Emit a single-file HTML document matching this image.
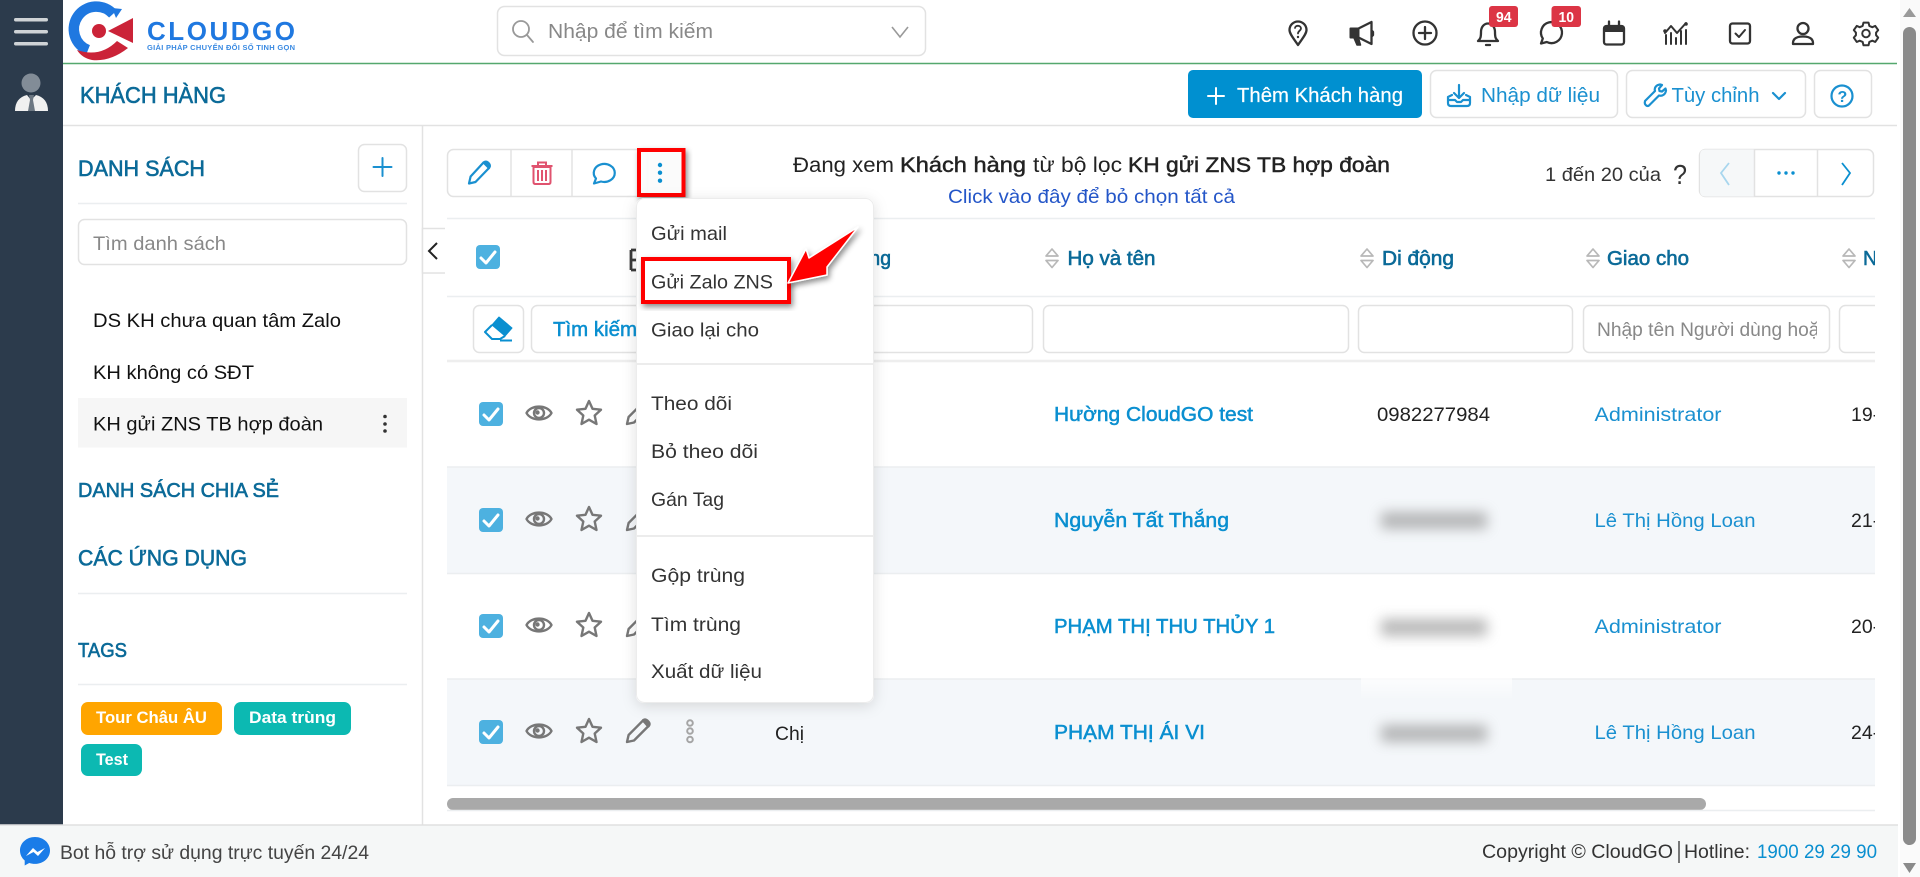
<!DOCTYPE html>
<html lang="vi">
<head>
<meta charset="utf-8">
<title>Khách hàng - CloudGO</title>
<style>
html,body{margin:0;padding:0;width:1920px;height:877px;overflow:hidden;background:#fff}
svg{display:block}
text{font-family:"Liberation Sans","Noto Sans CJK SC",sans-serif;font-size:19.5px;fill:#222;white-space:pre}
.blue{fill:#0a8fd0}.bm{fill:#0a8fd0;stroke:#0a8fd0;stroke-width:.5px}
.teal{fill:#0b6a98;stroke:#0b6a98;stroke-width:.6px}
.gr{fill:#888}
.mi{fill:#333}
.box{fill:#fff;stroke:#e2e2e2;stroke-width:1.5px}
.ln{stroke:#ebeef0;stroke-width:1.5px}
.ic{fill:none;stroke:#333;stroke-width:2.3px;stroke-linecap:round;stroke-linejoin:round}
.icb{fill:none;stroke:#1a90d0;stroke-width:2.2px;stroke-linecap:round;stroke-linejoin:round}
.g{fill:none;stroke:#777;stroke-width:2.4px;stroke-linejoin:round;stroke-linecap:round}
</style>
</head>
<body>
<svg width="1920" height="877" viewBox="0 0 1920 877" xmlns="http://www.w3.org/2000/svg">
<defs>
<filter id="blur" x="-30%" y="-150%" width="160%" height="400%"><feGaussianBlur stdDeviation="6.500"/></filter>
<filter id="sh" x="-20%" y="-20%" width="140%" height="140%"><feDropShadow dx="2" dy="3" stdDeviation="3" flood-color="#000" flood-opacity=".45"/></filter>
<filter id="menu" x="-20%" y="-10%" width="140%" height="120%"><feDropShadow dx="0" dy="3" stdDeviation="7" flood-color="#000" flood-opacity=".13"/></filter>
<clipPath id="tbl"><rect x="447" y="220" width="1428" height="590"/></clipPath>
<clipPath id="ph"><rect x="1597" y="310" width="220" height="40"/></clipPath>
<linearGradient id="fade" x1="0" y1="0" x2="0" y2="1"><stop offset="0" stop-color="#fff" stop-opacity="0"/><stop offset=".5" stop-color="#fff" stop-opacity=".7"/><stop offset="1" stop-color="#fff" stop-opacity="0"/></linearGradient>
<g id="chk"><rect x="-12" y="-12" width="24" height="24" rx="4" fill="#4db1e0"/><path d="M-7 1l5 5 9-11" fill="none" stroke="#fff" stroke-width="3" stroke-linecap="round" stroke-linejoin="round"/></g>
<g id="eye"><path class="g" d="M-12.5 0C-8-8.500 8-8.500 12.500 0 8 8.500-8 8.500-12.500 0Z"/><circle r="5" class="g"/><circle cx="-1.500" cy="-.5" r="2.200" fill="#777"/></g>
<path id="star" class="g" d="M0-12l3.500 7.800 8.500.9-6.300 5.800 1.800 8.500L0 6.700-7.500 11l1.800-8.500L-12-3.300l8.500-.9Z"/>
<g id="pen"><path class="g" d="M-11 11l1.600-7L5-10.500l5.500 5.500L-4 9.500Z"/><path d="M4-11.500q3-2.500 6 0l1.500 1.500q2.500 3 0 6l-1.500 1-6-7Z" fill="#777"/></g>
<g id="sort"><path d="M0-9.500l6 7h-12Z M0 9l6-7h-12Z" fill="none" stroke="#b8b8b8" stroke-width="1.700" stroke-linejoin="round"/></g>
</defs>

<!-- page frame -->
<rect width="1920" height="877" fill="#fff"/>
<rect x="0" y="0" width="63" height="825" fill="#2c3b4c"/>
<rect x="14" y="18" width="34" height="3.500" rx="1.700" fill="#cfd3d6"/>
<rect x="14" y="30" width="34" height="3.500" rx="1.700" fill="#cfd3d6"/>
<rect x="14" y="42" width="34" height="3.500" rx="1.700" fill="#cfd3d6"/>
<circle cx="31" cy="83" r="9.500" fill="#828c97"/>
<path d="M15 111Q15 98 27 95L31 100 36 95Q48 98 48 111Z" fill="#f0f0f0"/>
<path d="M29 95h5l-1 5 2 11h-7l2-11Z" fill="#6c7782"/>

<!-- logo -->
<path d="M113 14A22.500 22.500 0 1 0 88 50" fill="none" stroke="#1f78e0" stroke-width="10.500"/>
<path d="M112 8l10 1-6 9Z" fill="#1f78e0"/>
<circle cx="99" cy="31" r="7" fill="#cb2338"/>
<path d="M108 31L133 18V43Z" fill="#cb2338"/>
<path d="M77 50Q100 58 117 41L128 48Q110 62 92 60 82 58 77 50Z" fill="#cb2338"/>
<text x="147" y="40" textLength="148" lengthAdjust="spacing" style="font-size:26px;font-weight:700;fill:#1f78e0">CLOUDGO</text>
<text x="147" y="50" textLength="148" lengthAdjust="spacing" style="font-size:7.500px;font-weight:700;fill:#3a8ae2">GIẢI PHÁP CHUYỂN ĐỔI SỐ TINH GỌN</text>

<!-- top search -->
<rect x="497.500" y="6.500" width="428" height="49" rx="7" class="box"/>
<circle cx="521" cy="29" r="8" fill="none" stroke="#999" stroke-width="1.800"/><path d="M527 35l6 7" stroke="#999" stroke-width="1.800" stroke-linecap="round"/>
<text x="548" y="38" textLength="165" lengthAdjust="spacingAndGlyphs" class="gr" style="font-size:20px">Nhập để tìm kiếm</text>
<path d="M892 27l8 10 8-10" fill="none" stroke="#999" stroke-width="1.600"/>
<line x1="63" y1="63.500" x2="1897" y2="63.500" stroke="#55a86e" stroke-width="1.500"/>

<!-- top icons -->
<path class="ic" d="M1298 45c-4-6-8.500-11-8.500-15a8.500 8.500 0 0 1 17 0c0 4-4.500 9-8.500 15Z"/>
<path class="ic" d="M1295 28c0-3 6-3 6 .5 0 2-3 2.500-3 5" style="stroke-width:1.800px"/><circle cx="1298" cy="37" r="1.200" fill="#333"/>
<path d="M1350.500 28.500h8v9h-8Z" fill="#333" stroke="#333" stroke-width="2" stroke-linejoin="round"/>
<path class="ic" d="M1358.500 28.500l13-6.500v22l-13-6.500M1371.500 30.500l1.500 1.500v3l-1.500 1.500"/>
<path d="M1354 38l3 7h3.500l-2-7Z" fill="#333" stroke="#333" stroke-width="1.500" stroke-linejoin="round"/>
<circle class="ic" cx="1425" cy="33" r="11.500"/><path class="ic" d="M1425 27v12M1419 33h12"/>
<path class="ic" d="M1478 41h20c-2.500-2-3-4-3-9 0-5-3-8.500-7-8.500s-7 3.500-7 8.500c0 5-.5 7-3 9ZM1486 45h4"/>
<path class="ic" d="M1541 43.500l1.800-5a10.500 10.500 0 1 1 4 3.500Z"/>
<rect class="ic" x="1604" y="26" width="20" height="18.500" rx="2.500"/><path d="M1604 26h20v6h-20Z" fill="#333"/><path class="ic" d="M1609 21.500v4M1619 21.500v4"/>
<path class="ic" d="M1665 33l6-7 6 7 9-10M1666 35v9M1671 33v11M1676 38v6M1681 31v13M1686 30v14" style="stroke-width:2px"/>
<circle cx="1665" cy="31" r="1.800" fill="#333"/><circle cx="1686" cy="24" r="1.800" fill="#333"/>
<rect class="ic" x="1730" y="23.500" width="20" height="20" rx="2.500"/><path class="ic" d="M1735.500 33.500l3.500 3.500 6-7" style="stroke-width:2px"/>
<circle class="ic" cx="1803" cy="28.500" r="5.500"/><path class="ic" d="M1793 44c0-2 0-3 1.500-5 2-2 5-2.500 8.500-2.500s6.500.5 8.500 2.500c1.500 2 1.500 3 1.500 5Z"/>
<g transform="translate(1866 33.500) scale(.84) translate(-1866 -33.500)"><path class="ic" d="M1863 20.500h6l1 4 3.500 1.500 3.500-1.500 3.500 5-2.500 3v3l2.500 3-3.500 5-3.500-1.500-3.500 1.500-1 4h-6l-1-4-3.500-1.500-3.500 1.500-3.500-5 2.500-3v-3l-2.500-3 3.500-5 3.500 1.500 3.500-1.500Z" style="stroke-width:2.400px"/><circle class="ic" cx="1866" cy="33.500" r="4.500"/></g>
<rect x="1489" y="6" width="29" height="21" rx="3" fill="#dc3545"/><text x="1496" y="22" textLength="15.500" lengthAdjust="spacingAndGlyphs" style="font-size:15px;font-weight:700;fill:#fff">94</text>
<rect x="1551.500" y="6" width="29.500" height="21" rx="3" fill="#dc3545"/><text x="1558.500" y="22" textLength="15.500" lengthAdjust="spacingAndGlyphs" style="font-size:15px;font-weight:700;fill:#fff">10</text>

<!-- title bar -->
<text x="80" y="103" textLength="146" lengthAdjust="spacingAndGlyphs" class="teal" style="font-size:23px">KHÁCH HÀNG</text>
<rect x="1188" y="70" width="234" height="48" rx="5" fill="#0090d0"/>
<path d="M1216 88v16M1208 96h16" stroke="#fff" stroke-width="2" stroke-linecap="round"/>
<text x="1237" y="102" textLength="166" lengthAdjust="spacingAndGlyphs" style="font-size:20px;fill:#fff;stroke:#fff;stroke-width:.2px">Thêm Khách hàng</text>
<rect x="1430.500" y="70.500" width="187" height="47" rx="6" class="box"/>
<path class="icb" d="M1459 85v13M1454 93l5 5 5-5M1448 97v6c0 2 1 3 3 3h16c2 0 3-1 3-3v-6M1448 97l4-2M1470 97l-4-2M1448 100h7l2 2h4l2-2h7"/>
<text x="1481" y="102" textLength="119" lengthAdjust="spacingAndGlyphs" style="font-size:20px;fill:#1a90d0">Nhập dữ liệu</text>
<rect x="1626.500" y="70.500" width="179" height="47" rx="6" class="box"/>
<path class="icb" d="M1645 101l10-10c-1-3 1-6 5-6.500l2 .5-3 3.500.5 2.500 2.500.5 3.500-3 .5 2c-.5 4-4 6-7 5l-10 10c-2 1.500-5-1-4-4Z"/>
<text x="1671.500" y="102" textLength="88" lengthAdjust="spacingAndGlyphs" style="font-size:20px;fill:#1a90d0">Tùy chỉnh</text>
<path class="icb" d="M1773 93l6 6 6-6"/>
<rect x="1814.500" y="70.500" width="57" height="47" rx="6" class="box"/>
<circle class="icb" cx="1842" cy="96" r="10.500"/>
<text x="1837.500" y="102" style="font-size:16px;font-weight:700;fill:#1a90d0">?</text>
<line x1="63" y1="125.500" x2="1897" y2="125.500" stroke="#e2e2e2" stroke-width="1.500"/>
<line x1="422.500" y1="125" x2="422.500" y2="825" stroke="#e2e2e2" stroke-width="1.500"/>

<!-- left panel -->
<text x="78" y="176" textLength="127" lengthAdjust="spacingAndGlyphs" class="teal" style="font-size:22px">DANH SÁCH</text>
<rect x="358.500" y="144.500" width="48" height="47" rx="6" class="box"/>
<path d="M382.500 158v18M373.500 167h18" stroke="#1a90d0" stroke-width="2" stroke-linecap="round"/>
<line class="ln" x1="78" y1="203.500" x2="407" y2="203.500"/>
<rect x="78.500" y="219.500" width="328" height="45" rx="6" class="box"/>
<text x="93" y="250" textLength="133" lengthAdjust="spacingAndGlyphs" class="gr">Tìm danh sách</text>
<text x="93" y="327" textLength="248" lengthAdjust="spacingAndGlyphs" style="fill:#111">DS KH chưa quan tâm Zalo</text>
<text x="93" y="379" textLength="161" lengthAdjust="spacingAndGlyphs" style="fill:#111">KH không có SĐT</text>
<rect x="78" y="398" width="329" height="49.500" fill="#f6f6f6"/>
<text x="93" y="430.500" textLength="230" lengthAdjust="spacingAndGlyphs" style="fill:#111">KH gửi ZNS TB hợp đoàn</text>
<circle cx="385" cy="416.500" r="1.800" fill="#333"/><circle cx="385" cy="424" r="1.800" fill="#333"/><circle cx="385" cy="431" r="1.800" fill="#333"/>
<text x="78" y="497" textLength="201" lengthAdjust="spacingAndGlyphs" class="teal" style="font-size:20px">DANH SÁCH CHIA SẺ</text>
<text x="78" y="565.500" textLength="169" lengthAdjust="spacingAndGlyphs" class="teal" style="font-size:22px">CÁC ỨNG DỤNG</text>
<line class="ln" x1="78" y1="593.500" x2="407" y2="593.500"/>
<text x="78" y="657" textLength="49" lengthAdjust="spacingAndGlyphs" class="teal" style="font-size:20px">TAGS</text>
<line class="ln" x1="78" y1="684.500" x2="407" y2="684.500"/>
<rect x="81" y="702" width="141" height="33" rx="7" fill="#ffa500"/>
<text x="96" y="723" textLength="111" lengthAdjust="spacingAndGlyphs" style="font-size:16.500px;font-weight:700;fill:#fff">Tour Châu ÂU</text>
<rect x="234" y="702" width="117" height="33" rx="7" fill="#0cb9b2"/>
<text x="249" y="723" textLength="87" lengthAdjust="spacingAndGlyphs" style="font-size:16.500px;font-weight:700;fill:#fff">Data trùng</text>
<rect x="81" y="744" width="61" height="32" rx="7" fill="#0cb9b2"/>
<text x="96" y="765" textLength="32" lengthAdjust="spacingAndGlyphs" style="font-size:16.500px;font-weight:700;fill:#fff">Test</text>

<!-- collapse -->
<rect x="422.500" y="228.500" width="30" height="44.500" fill="#fff" stroke="#e2e2e2" stroke-width="1.500"/>
<rect x="445" y="226" width="10" height="50" fill="#fff"/>
<path d="M437 243l-8 8 8 8" fill="none" stroke="#222" stroke-width="2"/>

<!-- list toolbar -->
<rect x="447.500" y="149.500" width="200" height="47" rx="6" class="box"/>
<line x1="511" y1="149" x2="511" y2="197" stroke="#e2e2e2" stroke-width="1.500"/>
<line x1="572" y1="149" x2="572" y2="197" stroke="#e2e2e2" stroke-width="1.500"/>
<g transform="translate(479 173)"><path class="icb" d="M-10 10.500l1.600-7L4.500-10.500l5.500 5.500L-3.500 9Z"/><path d="M4-11.500q3-2 5.500 0l1.500 1.500q2 3 0 5.500l-1 1-6.500-7Z" fill="#1a90d0"/></g>
<g transform="translate(542 173)" fill="none" stroke="#e0536f" stroke-width="2"><path d="M-8.500-6v15q0 2 2 2h13q2 0 2-2V-6Z"/><path d="M-10.500-7h21M-4-7v-3.500h8V-7M-4-3v11M0-3v11M4-3v11"/></g>
<path class="icb" d="M594 183.500l2-5a10.500 9 0 1 1 5 3Z"/>
<g filter="url(#sh)"><rect x="639" y="150" width="44.500" height="45" fill="#fff" fill-opacity=".9" stroke="#f00" stroke-width="4"/></g>
<circle cx="660" cy="165" r="2.200" fill="#0a8fd0"/><circle cx="660" cy="172.700" r="2.200" fill="#0a8fd0"/><circle cx="660" cy="180.700" r="2.200" fill="#0a8fd0"/>

<!-- header summary -->
<text x="793" y="172" textLength="101" lengthAdjust="spacingAndGlyphs" style="font-size:21px">Đang xem</text>
<text x="900" y="172" textLength="126" lengthAdjust="spacingAndGlyphs" style="font-size:21px;stroke:#222;stroke-width:.45px">Khách hàng</text>
<text x="1033" y="172" textLength="89" lengthAdjust="spacingAndGlyphs" style="font-size:21px">từ bộ lọc</text>
<text x="1128" y="172" textLength="262" lengthAdjust="spacingAndGlyphs" style="font-size:21px;stroke:#222;stroke-width:.45px">KH gửi ZNS TB hợp đoàn</text>
<text x="948" y="203" textLength="287" lengthAdjust="spacingAndGlyphs" style="fill:#2456c8">Click vào đây để bỏ chọn tất cả</text>
<text x="1545" y="181" textLength="116" lengthAdjust="spacingAndGlyphs" style="fill:#333">1 đến 20 của</text>
<text x="1673" y="184" textLength="14" lengthAdjust="spacingAndGlyphs" style="font-size:28px;fill:#333">?</text>
<rect x="1699.500" y="149.500" width="174" height="47" rx="6" class="box"/>
<path d="M1700 155q0-5.500 5.500-5.500h48.500v47h-48.500q-5.500 0-5.500-5.500Z" fill="#f6f8f9"/>
<line x1="1754.500" y1="149" x2="1754.500" y2="197" stroke="#e2e2e2" stroke-width="1.500"/>
<line x1="1817.500" y1="149" x2="1817.500" y2="197" stroke="#e2e2e2" stroke-width="1.500"/>
<path d="M1729 163l-8 10 8 12" fill="none" stroke="#a8d6ee" stroke-width="1.800"/>
<circle cx="1779" cy="173" r="1.700" fill="#0a8fd0"/><circle cx="1786" cy="173" r="1.700" fill="#0a8fd0"/><circle cx="1793" cy="173" r="1.700" fill="#0a8fd0"/>
<path d="M1842 163l8 10-8 12" fill="none" stroke="#0a8fd0" stroke-width="1.800"/>
<line class="ln" x1="447" y1="218.500" x2="1875" y2="218.500"/>

<!-- table -->
<g clip-path="url(#tbl)">
<rect x="447" y="467" width="1428" height="106.500" fill="#f4f7fa"/>
<rect x="447" y="679" width="1428" height="106.500" fill="#f4f7fa"/>
<line class="ln" x1="447" y1="296.500" x2="1875" y2="296.500"/>
<line x1="447" y1="361" x2="1875" y2="361" stroke="#eeeeee" stroke-width="2.500"/>
<line class="ln" x1="447" y1="467" x2="1875" y2="467"/>
<line class="ln" x1="447" y1="573.500" x2="1875" y2="573.500"/>
<line class="ln" x1="447" y1="679" x2="1875" y2="679"/>
<line class="ln" x1="447" y1="785.500" x2="1875" y2="785.500"/>

<use href="#chk" x="488" y="257"/>
<path d="M631 250v20M631 250h6M631 260h6M631 270h6" fill="none" stroke="#3a3a3a" stroke-width="2.800"/>
<text x="795" y="265" textLength="96" lengthAdjust="spacingAndGlyphs" class="teal" style="font-size:20px">Danh xưng</text>
<use href="#sort" x="1052" y="258.500"/>
<text x="1067.500" y="265" textLength="88" lengthAdjust="spacingAndGlyphs" class="teal" style="font-size:20px">Họ và tên</text>
<use href="#sort" x="1367" y="258.500"/>
<text x="1382" y="265" textLength="72" lengthAdjust="spacingAndGlyphs" class="teal" style="font-size:20px">Di động</text>
<use href="#sort" x="1593" y="258.500"/>
<text x="1607" y="265" textLength="82" lengthAdjust="spacingAndGlyphs" class="teal" style="font-size:20px">Giao cho</text>
<use href="#sort" x="1849" y="258.500"/>
<text x="1863" y="265" class="teal" style="font-size:20px">N</text>

<rect x="473.500" y="305.500" width="50" height="47" rx="6" class="box"/>
<path d="M499 317L512 328 505 336 492 325Z" fill="#0a8fd0" stroke="#0a8fd0" stroke-width="1" stroke-linejoin="round"/>
<path d="M492 325L485 332 492 339H500L505 336M500 340.500H512" fill="none" stroke="#0a8fd0" stroke-width="2" stroke-linejoin="round"/>
<rect x="531.500" y="305.500" width="130" height="47" rx="6" class="box"/>
<text x="553" y="336" textLength="84" lengthAdjust="spacingAndGlyphs" class="bm" style="font-size:20px">Tìm kiếm</text>
<rect x="800.500" y="305.500" width="232" height="47" rx="6" class="box"/>
<rect x="1043.500" y="305.500" width="305" height="47" rx="6" class="box"/>
<rect x="1358.500" y="305.500" width="214" height="47" rx="6" class="box"/>
<rect x="1583.500" y="305.500" width="246" height="47" rx="6" class="box"/>
<rect x="1839.500" y="305.500" width="100" height="47" rx="6" class="box"/>
<g clip-path="url(#ph)"><text x="1597" y="336" textLength="232" lengthAdjust="spacingAndGlyphs" class="gr" style="font-size:19px">Nhập tên Người dùng hoặc</text></g>

<!-- rows -->
<g id="rowicons">
<use href="#chk" x="491" y="414"/><use href="#eye" x="539" y="413"/><use href="#star" x="589" y="413"/><use href="#pen" x="638" y="413"/>
<use href="#chk" x="491" y="520"/><use href="#eye" x="539" y="519"/><use href="#star" x="589" y="519"/><use href="#pen" x="638" y="519"/>
<use href="#chk" x="491" y="626"/><use href="#eye" x="539" y="625"/><use href="#star" x="589" y="625"/><use href="#pen" x="638" y="625"/>
<use href="#chk" x="491" y="732"/><use href="#eye" x="539" y="731"/><use href="#star" x="589" y="731"/><use href="#pen" x="638" y="731"/>
</g>
<g fill="none" stroke="#a5a5a5" stroke-width="2"><circle cx="690" cy="723" r="2.800"/><circle cx="690" cy="731" r="2.800"/><circle cx="690" cy="739.500" r="2.800"/></g>
<text x="775" y="740" textLength="29" lengthAdjust="spacingAndGlyphs">Chị</text>

<text x="1054" y="421" textLength="199" lengthAdjust="spacingAndGlyphs" class="bm" style="font-size:20px">Hường CloudGO test</text>
<text x="1377" y="421" textLength="113" lengthAdjust="spacingAndGlyphs">0982277984</text>
<text x="1594.500" y="421" textLength="127" lengthAdjust="spacingAndGlyphs" style="fill:#1a90d0">Administrator</text>
<text x="1851" y="421">19-</text>

<text x="1054" y="527" textLength="175" lengthAdjust="spacingAndGlyphs" class="bm" style="font-size:20px">Nguyễn Tất Thắng</text>
<rect x="1381" y="512" width="106" height="17" fill="#8a8a8a" opacity=".6" filter="url(#blur)"/>
<text x="1594.500" y="527" textLength="161" lengthAdjust="spacingAndGlyphs" style="fill:#1a90d0">Lê Thị Hồng Loan</text>
<text x="1851" y="527">21-</text>

<text x="1054" y="633" textLength="221" lengthAdjust="spacingAndGlyphs" class="bm" style="font-size:20px">PHẠM THỊ THU THỦY 1</text>
<rect x="1381" y="619" width="106" height="17" fill="#8a8a8a" opacity=".6" filter="url(#blur)"/>
<text x="1594.500" y="633" textLength="127" lengthAdjust="spacingAndGlyphs" style="fill:#1a90d0">Administrator</text>
<text x="1851" y="633">20-</text>
<rect x="1361" y="660" width="151" height="40" fill="url(#fade)"/>

<text x="1054" y="739" textLength="151" lengthAdjust="spacingAndGlyphs" class="bm" style="font-size:20px">PHẠM THỊ ÁI VI</text>
<rect x="1381" y="725" width="106" height="17" fill="#8a8a8a" opacity=".6" filter="url(#blur)"/>
<text x="1594.500" y="739" textLength="161" lengthAdjust="spacingAndGlyphs" style="fill:#1a90d0">Lê Thị Hồng Loan</text>
<text x="1851" y="739">24-</text>
</g>

<!-- horizontal scrollbar -->
<rect x="447" y="798" width="1259" height="12" rx="6" fill="#a9a9a9"/>
<line class="ln" x1="447" y1="810.500" x2="1875" y2="810.500"/>

<!-- dropdown -->
<rect x="636" y="198" width="238" height="505" rx="8" fill="#fff" filter="url(#menu)"/>
<rect x="636.500" y="198.500" width="237" height="504" rx="8" fill="none" stroke="#ececec"/>
<text x="651" y="240" textLength="76" lengthAdjust="spacingAndGlyphs" class="mi">Gửi mail</text>
<g filter="url(#sh)"><rect x="643" y="259" width="146" height="43" fill="#fff" stroke="#f00" stroke-width="4"/></g>
<text x="651" y="288.500" textLength="122" lengthAdjust="spacingAndGlyphs" class="mi">Gửi Zalo ZNS</text>
<text x="651" y="336.500" textLength="108" lengthAdjust="spacingAndGlyphs" class="mi">Giao lại cho</text>
<line x1="636" y1="364" x2="874" y2="364" stroke="#ececec" stroke-width="2"/>
<text x="651" y="410" textLength="81" lengthAdjust="spacingAndGlyphs" class="mi">Theo dõi</text>
<text x="651" y="458" textLength="107" lengthAdjust="spacingAndGlyphs" class="mi">Bỏ theo dõi</text>
<text x="651" y="506" textLength="73" lengthAdjust="spacingAndGlyphs" class="mi">Gán Tag</text>
<line x1="636" y1="536" x2="874" y2="536" stroke="#ececec" stroke-width="2"/>
<text x="651" y="582" textLength="94" lengthAdjust="spacingAndGlyphs" class="mi">Gộp trùng</text>
<text x="651" y="631" textLength="90" lengthAdjust="spacingAndGlyphs" class="mi">Tìm trùng</text>
<text x="651" y="678" textLength="111" lengthAdjust="spacingAndGlyphs" class="mi">Xuất dữ liệu</text>

<!-- arrow -->
<path d="M788 283L806 249 809 258 858 227 827 267 827 275Z" fill="#f00" stroke="#fff" stroke-width="1.500" stroke-linejoin="round" filter="url(#sh)"/>

<!-- footer -->
<rect x="0" y="825" width="1898" height="52" fill="#f5f7f7"/>
<line x1="0" y1="825" x2="1898" y2="825" stroke="#e0e0e0" stroke-width="1.500"/>
<path d="M35 837c-8.500 0-15 6-15 13.500 0 4 1.800 7.500 4.700 10v5l4.500-2.500c1.800.6 3.700.9 5.800.9 8.500 0 15-6 15-13.400S43.500 837 35 837Z" fill="#1a7ce8"/>
<path d="M26 856l7-8 4.500 4 7.500-4-7 8-4.500-4Z" fill="#fff"/>
<text x="60" y="859" textLength="309" lengthAdjust="spacingAndGlyphs" style="fill:#444">Bot hỗ trợ sử dụng trực tuyến 24/24</text>
<text x="1482" y="858" textLength="191" lengthAdjust="spacingAndGlyphs" style="fill:#333">Copyright © CloudGO</text>
<line x1="1679" y1="841" x2="1679" y2="863" stroke="#333" stroke-width="1.300"/>
<text x="1684" y="858" textLength="66" lengthAdjust="spacingAndGlyphs" style="fill:#333">Hotline:</text>
<text x="1757" y="858" textLength="120" lengthAdjust="spacingAndGlyphs" style="fill:#0a8fd0">1900 29 29 90</text>

<!-- page scrollbar -->
<rect x="1900" y="0" width="20" height="877" fill="#fafafa"/>
<rect x="1903" y="27" width="13" height="818" rx="6.500" fill="#8a8a8a"/>
<path d="M1909.500 8l6.500 9h-13Z" fill="#9a9a9a"/>
<path d="M1909.500 873l6.500-10h-13Z" fill="#8a8a8a"/>
</svg>
</body>
</html>
